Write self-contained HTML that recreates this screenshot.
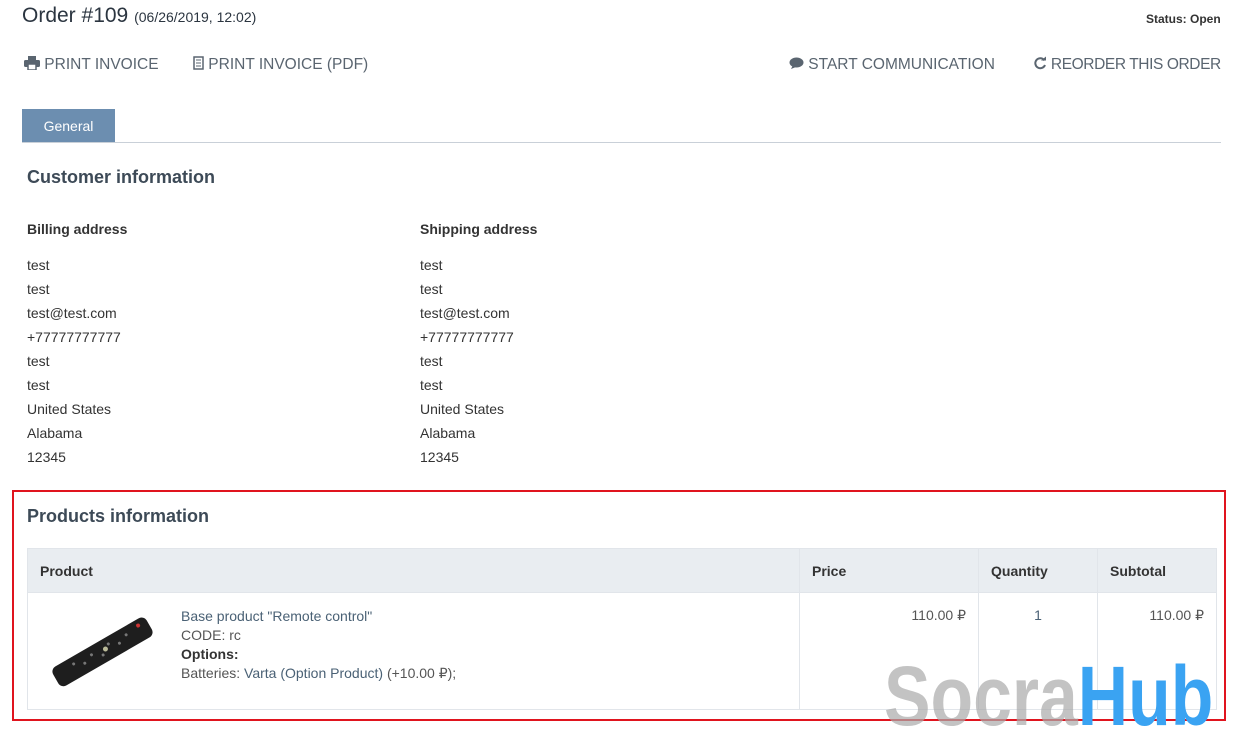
<!DOCTYPE html>
<html><head><meta charset="utf-8"><style>
body{margin:0;width:1233px;height:733px;background:#fff;font-family:"Liberation Sans",sans-serif;color:#333;position:relative;overflow:hidden}
.a{position:absolute;white-space:nowrap}
.lnk{font-size:15.5px;color:#5a6570;top:56px}
.t{font-size:14px;color:#333}
.h{font-size:18px;font-weight:bold;color:#3d4a57}
.b{font-size:14px;font-weight:bold;color:#333}
td,th{border:1px solid #e1e5ea;font-size:14px;vertical-align:top;padding:0 12px}
th{background:#e9edf1;text-align:left;height:43px;vertical-align:middle;color:#333}
</style></head><body>
<div class="a" style="left:22px;top:4px;font-size:21px;color:#2b3540">Order #109 <span style="font-size:14px">(06/26/2019, 12:02)</span></div>
<div class="a" style="left:1146px;top:12px;font-size:12px;font-weight:bold;color:#333">Status: Open</div>
<div class="a lnk" style="left:24px"><svg width="16" height="14" viewBox="0 0 16 14" style="vertical-align:-1px"><rect x="4" y="0" width="8" height="4" fill="#5a6570"/><rect x="0" y="4" width="16" height="7" rx="1.5" fill="#5a6570"/><rect x="4" y="8" width="8" height="6" fill="#fff" stroke="#5a6570" stroke-width="1.5"/></svg> PRINT INVOICE</div>
<div class="a lnk" style="left:193px"><svg width="11" height="14" viewBox="0 0 11 14" style="vertical-align:-1px"><rect x="1" y="1" width="9" height="12" fill="none" stroke="#5a6570" stroke-width="1.5"/><path d="M3 4h5M3 7h5M3 10h5" stroke="#5a6570"/></svg> PRINT INVOICE (PDF)</div>
<div class="a lnk" style="left:789px"><svg width="15" height="13" viewBox="0 0 15 13" style="vertical-align:-1px"><ellipse cx="7.5" cy="5.5" rx="7" ry="5" fill="#5a6570"/><path d="M2 12l2-4 3 2z" fill="#5a6570"/></svg> START COMMUNICATION</div>
<div class="a lnk" style="left:1033px;letter-spacing:-0.4px"><svg width="14" height="14" viewBox="0 0 14 14" style="vertical-align:-1px"><path d="M11.5 4.5A5 5 0 1 0 12 9" fill="none" stroke="#5a6570" stroke-width="2"/><path d="M8 4.5h5v-4z" fill="#5a6570"/></svg> REORDER THIS ORDER</div>
<div class="a" style="left:22px;top:109px;width:93px;height:33px;background:#6c8eb0;color:#fff;font-size:14px;text-align:center;line-height:35px">General</div>
<div class="a" style="left:22px;top:142px;width:1199px;height:1px;background:#c9d0d8"></div>
<div class="a h" style="left:27px;top:167px">Customer information</div>
<div class="a b" style="left:27px;top:221px">Billing address</div>
<div class="a b" style="left:420px;top:221px">Shipping address</div>
<div class="a t" style="left:27px;top:253px;line-height:24px">test<br>test<br>test@test.com<br>+77777777777<br>test<br>test<br>United States<br>Alabama<br>12345</div>
<div class="a t" style="left:420px;top:253px;line-height:24px">test<br>test<br>test@test.com<br>+77777777777<br>test<br>test<br>United States<br>Alabama<br>12345</div>
<div class="a" style="left:12px;top:490px;width:1210px;height:227px;border:2px solid #e0141e"></div>
<div class="a h" style="left:27px;top:506px">Products information</div>
<table class="a" style="left:27px;top:548px;width:1190px;border-collapse:collapse">
<tr><th style="width:747px">Product</th><th style="width:154px">Price</th><th style="width:94px">Quantity</th><th>Subtotal</th></tr>
<tr style="height:117px"><td style="padding-top:14px;line-height:19px">
<div style="position:relative;padding-left:141px;color:#555">
<svg style="position:absolute;left:6px;top:4px" width="112" height="80" viewBox="0 0 112 80"><g transform="rotate(-30 56 40)"><rect x="2" y="30" width="108" height="22" rx="6" fill="#1e1e1e"/><g fill="#777"><circle cx="25" cy="37" r="1.5"/><circle cx="35" cy="42" r="1.5"/><circle cx="45" cy="38" r="1.5"/><circle cx="55" cy="44" r="1.5"/><circle cx="65" cy="37" r="1.5"/><circle cx="75" cy="42" r="1.5"/><circle cx="85" cy="38" r="1.5"/></g><circle cx="100" cy="36" r="2" fill="#c33"/><circle cx="60" cy="40" r="2.5" fill="#bb9"/></g></svg>
<span style="color:#4a6175">Base product "Remote control"</span><br>CODE: rc<br><b style="color:#333">Options:</b><br>Batteries: <span style="color:#4a6175">Varta (Option Product)</span> (+10.00 ₽);</div></td>
<td style="text-align:right;padding-top:14px;color:#555">110.00 ₽</td>
<td style="text-align:center;padding-top:14px;color:#4a6175">1</td>
<td style="text-align:right;padding-top:14px;color:#555">110.00 ₽</td></tr>
</table>
<div class="a" style="left:884px;top:654px;font-size:84px;font-weight:bold;line-height:84px;transform:scaleX(0.83);transform-origin:0 0"><span style="color:rgba(170,170,170,.7)">Socra</span><span style="color:#3aa3f2">Hub</span></div>
</body></html>
